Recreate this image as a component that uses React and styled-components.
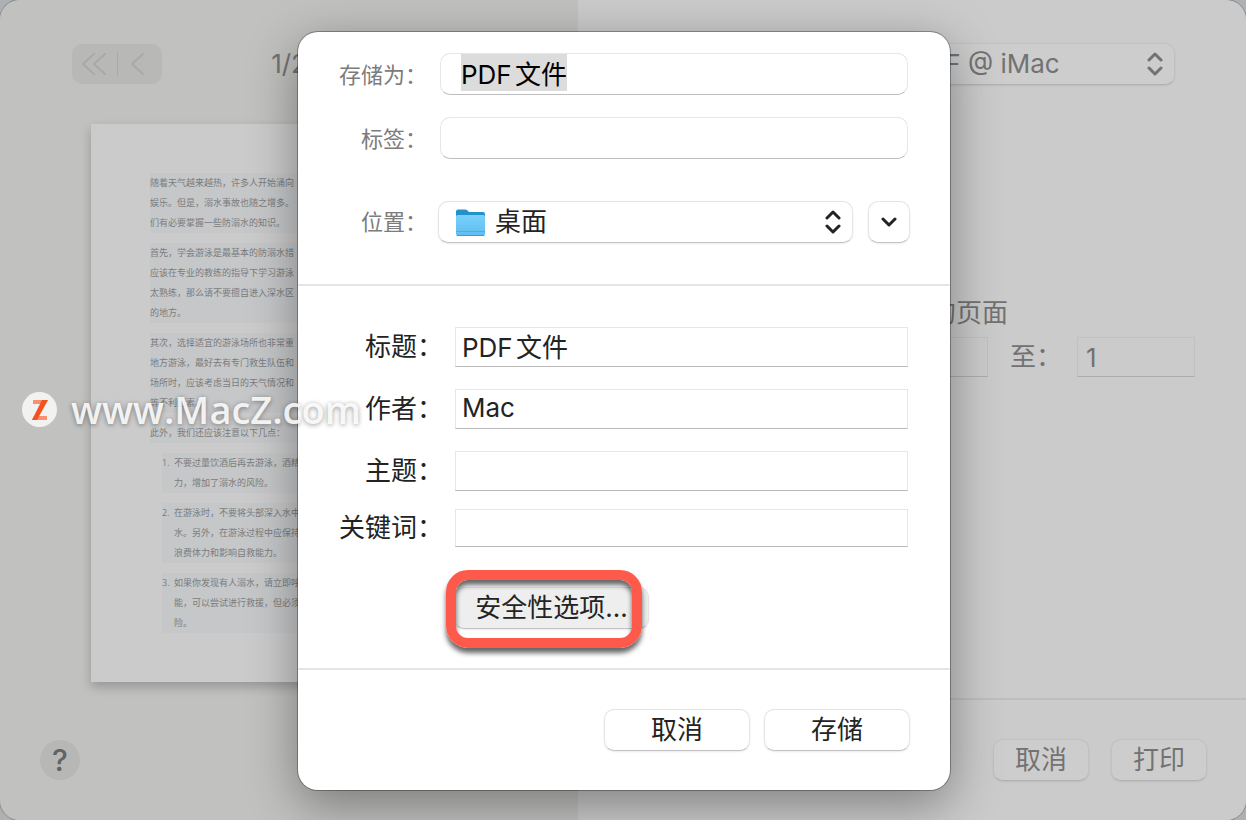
import React, { useEffect, useRef } from 'react';
import styled, { createGlobalStyle } from 'styled-components';

const GlobalStyle = createGlobalStyle`
  *, *::before, *::after {
    box-sizing: border-box;
  }

  body {
    margin: 0;
    background: #aeb1b3;
    font-family: Inter, "Noto Sans CJK SC", sans-serif;
    font-size: 26px;
  }

  button, input, select {
    font: inherit;
    color: inherit;
    margin: 0;
  }
`;

const Desktop = styled.div`
  position: relative;
  min-height: 100vh;
  overflow: hidden;
`;

const PrintWindow = styled.div`
  display: grid;
  grid-template-columns: 46.4% 1fr;
  min-height: 100vh;
  border-radius: 20px;
  overflow: hidden;
  color: #727272;
  box-shadow: 0 0 0 1px #8c8c8c;
`;

const PreviewPane = styled.section`
  display: flex;
  flex-direction: column;
  gap: 40px;
  padding: 44px 40px 40px;
  background: #c1c1bf;
`;

const PreviewHeader = styled.header`
  display: grid;
  grid-template-columns: 1fr auto 1fr;
  align-items: center;
  padding: 0 32px;
`;

const Pager = styled.div`
  display: flex;
  align-items: center;
  justify-content: center;
  width: 90px;
  height: 40px;
  border-radius: 10px;
  background: #b8b8b7;
`;

const PagerButton = styled.button`
  display: flex;
  justify-content: center;
  width: 44px;
  padding: 0;
  border: 0;
  background: none;
  color: #a9a9a8;
`;

const PagerLine = styled.span`
  width: 1px;
  height: 24px;
  background: #a8a8a7;
`;

const PageCount = styled.span`
  line-height: 40px;
`;

const Paper = styled.article`
  margin: 0 51px;
  padding: 49px 0 49px 59px;
  background: #cbcbcb;
  box-shadow: 0 5px 10px rgba(0, 0, 0, 0.22);
  color: #7b7c7d;
  font-family: "Liberation Serif", "Noto Sans CJK SC", serif;
  font-size: 9px;
  line-height: 20px;
`;

const Paragraph = styled.p`
  margin: 0 0 10px;
  background: #c5c7c9;
  white-space: pre-line;
`;

const PaperList = styled.ol`
  margin: 0;
  padding: 0 0 0 12px;
  list-style: none;
`;

const PaperItem = styled.li`
  display: flex;
  background: #c5c7c9;
  white-space: pre-line;

  & + & {
    margin-top: 10px;
  }
`;

const ItemNumber = styled.span`
  width: 12px;
  font-family: "Open Sans", sans-serif;
`;

const HelpButton = styled.button`
  width: 40px;
  height: 40px;
  margin-top: auto;
  padding: 0;
  border: 0;
  border-radius: 50%;
  background: #b7b7b6;
  color: #636363;
  font-size: 30px;
  font-weight: 500;
  line-height: 40px;
`;

const SettingsPane = styled.section`
  display: flex;
  flex-direction: column;
  background: #cbcbcb;
`;

const SettingsBody = styled.div`
  flex: 1;
  display: flex;
  flex-direction: column;
  align-items: flex-end;
  padding: 43px 51px 0 0;
`;

const PrinterRow = styled.div`
  width: 288px;
  margin: 0 20px 208px 0;
`;

const PageRange = styled.fieldset`
  width: 325px;
  margin: 0;
  padding: 0;
  border: 0;
`;

const RangeTitle = styled.legend`
  padding: 0 0 0 60px;
  line-height: 40px;
`;

const RangeRow = styled.div`
  display: flex;
  align-items: center;
  justify-content: space-between;
  margin-top: 4px;
`;

const RangeLabel = styled.label`
  line-height: 40px;
  margin-left: 7px;
`;

const RangeInput = styled.input`
  width: 118px;
  height: 40px;
  padding: 0 8px;
  border: 1px solid #c1c1c1;
  border-bottom-color: #adadad;
  background: #cbcbcb;
`;

const SettingsFooter = styled.footer`
  display: flex;
  justify-content: flex-end;
  gap: 22px;
  padding: 39px 39px 39px 0;
  border-top: 2px solid #bebebe;
`;

const Button = styled.button`
  width: ${(props) => props.$width};
  height: 42px;
  padding: 0;
  border: 1px solid ${(props) => (props.$dim ? '#c1c1c1' : '#e4e4e4')};
  border-bottom-color: ${(props) => (props.$dim ? '#b2b2b2' : '#c2c2c2')};
  border-radius: 10px;
  background: ${(props) => (props.$dim ? '#cdcdcd' : props.$pressed ? '#eeeeee' : '#ffffff')};
  box-shadow: 0 1px 2px rgba(0, 0, 0, 0.08);
  line-height: 40px;
`;

const SelectBox = styled.div`
  position: relative;
  flex: 1;
`;

const Select = styled.select`
  appearance: none;
  display: block;
  width: 100%;
  height: 42px;
  padding: 0 48px 2px ${(props) => props.$indent};
  border: 1px solid ${(props) => (props.$dim ? '#c1c1c1' : '#e4e4e4')};
  border-bottom-color: ${(props) => (props.$dim ? '#b2b2b2' : '#c2c2c2')};
  border-radius: 10px;
  background: ${(props) => (props.$dim ? '#cdcdcd' : '#ffffff')};
  box-shadow: 0 1px 2px rgba(0, 0, 0, 0.08);
`;

const SelectArrows = styled.span`
  position: absolute;
  top: 9px;
  right: 12px;
  display: flex;
  pointer-events: none;
`;

const SelectIcon = styled.span`
  position: absolute;
  top: 8px;
  left: 18px;
  display: flex;
  pointer-events: none;
`;

const Overlay = styled.div`
  position: absolute;
  inset: 0;
  display: flex;
  justify-content: center;
  align-items: flex-start;
  padding: 32px 0 30px 2px;
`;

const SaveSheet = styled.form`
  width: 100%;
  max-width: 652px;
  border-radius: 20px;
  background: #ffffff;
  color: #232323;
  box-shadow: 0 0 0 1px rgba(0, 0, 0, 0.3), 0 14px 50px rgba(0, 0, 0, 0.38);
`;

const FileSection = styled.div`
  display: flex;
  flex-direction: column;
  gap: 22px;
  padding: 21px 40px 41px 0;
  border-bottom: 2px solid #e5e5e5;
`;

const FileRow = styled.div`
  display: flex;
  align-items: center;
  gap: 11px;
  margin-top: ${(props) => (props.$spaced ? '20px' : '0')};
`;

const FileLabel = styled.label`
  width: 129px;
  padding-top: ${(props) => (props.$low ? '2px' : '0')};
  color: #7c7c7c;
  font-size: 22px;
  line-height: 40px;
  text-align: right;
`;

const FileInput = styled.input`
  flex: 1;
  min-width: 0;
  height: 42px;
  margin: 0 2px;
  padding: 0 20px 4px;
  border: 1px solid #e6e6e6;
  border-bottom-color: #bdbdbd;
  border-radius: 10px;
  background: #ffffff;
  color: #000000;
  outline: none;
  text-autospace: normal;

  &::selection {
    background: #dcdcdc;
    color: #000000;
  }
`;

const ExpandButton = styled.button`
  display: flex;
  align-items: center;
  justify-content: center;
  width: 42px;
  height: 42px;
  margin-left: 4px;
  padding: 0;
  border: 1px solid #e4e4e4;
  border-bottom-color: #c2c2c2;
  border-radius: 10px;
  background: #ffffff;
  box-shadow: 0 1px 2px rgba(0, 0, 0, 0.08);
`;

const MetaSection = styled.div`
  padding: 41px 42px 39px 0;
  border-bottom: 2px solid #e5e5e5;
`;

const MetaRow = styled.div`
  display: flex;
  align-items: center;
  gap: 12px;
  margin-bottom: ${(props) => (props.$tight ? '18px' : '22px')};
`;

const MetaLabel = styled.label`
  width: 145px;
  line-height: 38px;
  text-align: right;
`;

const MetaInput = styled.input`
  flex: 1;
  min-width: 0;
  height: ${(props) => (props.$short ? '38px' : '40px')};
  padding: 0 6px 4px;
  border: 1px solid #e6e6e6;
  border-bottom-color: #b9b9b9;
  background: #ffffff;
  outline: none;
  text-autospace: normal;
`;

const SecurityRow = styled.div`
  position: relative;
  width: 195px;
  margin: 40px 0 0 156px;
`;

const Highlight = styled.span`
  position: absolute;
  inset: -17px 7px -19px -8px;
  border: 10px solid #fd5a4c;
  border-radius: 22px;
  box-shadow: 0 5px 5px rgba(0, 0, 0, 0.6), inset 0 5px 5px rgba(0, 0, 0, 0.6);
  pointer-events: none;
`;

const SheetFooter = styled.footer`
  display: flex;
  justify-content: flex-end;
  gap: 14px;
  padding: 39px 40px 39px 0;
`;

const Watermark = styled.div`
  position: absolute;
  top: 381px;
  left: 22px;
  display: flex;
  align-items: center;
  gap: 14px;
  color: rgba(255, 255, 255, 0.88);
  font-family: "Open Sans", sans-serif;
  font-size: 38px;
  font-weight: 600;
  line-height: 56px;
  text-shadow: 0 1px 5px rgba(0, 0, 0, 0.4);
  pointer-events: none;
`;

const Chevron = ({ double }) => (
  <svg width="26" height="22" viewBox="0 0 26 22" fill="none" stroke="currentColor" strokeWidth="2" strokeLinecap="round" strokeLinejoin="round">
    {double ? (
      <>
        <path d="M12 1L1 11l11 10" />
        <path d="M23 1L12 11l11 10" />
      </>
    ) : (
      <path d="M16 1L5 11l11 10" />
    )}
  </svg>
);

const UpDown = () => (
  <svg width="16" height="24" viewBox="0 0 16 24" fill="none" stroke="currentColor" strokeWidth="3" strokeLinecap="round" strokeLinejoin="round">
    <path d="M2 8l6-6 6 6" />
    <path d="M2 16l6 6 6-6" />
  </svg>
);

const Down = () => (
  <svg width="16" height="10" viewBox="0 0 16 10" fill="none" stroke="currentColor" strokeWidth="3" strokeLinecap="round" strokeLinejoin="round">
    <path d="M2 2l6 6 6-6" />
  </svg>
);

const Folder = () => (
  <svg width="30" height="28" viewBox="0 0 30 28">
    <defs>
      <linearGradient id="folderFront" x1="0" y1="0" x2="0" y2="1">
        <stop offset="0" stopColor="#79d0fb" />
        <stop offset="1" stopColor="#5fbdf0" />
      </linearGradient>
    </defs>
    <path d="M0 2.500Q0 .5 2 .5H9Q10.500 .5 11.500 1.500L13 3H27Q29 3 29 5V12H0Z" fill="#2492ca" />
    <path d="M0 7.500Q0 6 1.500 6H27.500Q29 6 29 7.500V25Q29 27 27 27H2Q0 27 0 25Z" fill="url(#folderFront)" />
    <path d="M0 22.500H29" stroke="#4faee0" strokeWidth="1" />
    <path d="M1 26.500H28" stroke="#3b9bd0" strokeWidth="1" />
  </svg>
);

const Logo = () => (
  <svg width="35" height="35" viewBox="0 0 35 35">
    <circle cx="17.500" cy="17.500" r="17.500" fill="#f2f2f2" />
    <path d="M11 8H26L23 12H11Z" fill="#fa8f72" />
    <path d="M12 24H25V28H10Z" fill="#fa8f72" />
    <path d="M20 8H26L15 28H10Z" fill="#f4511e" />
  </svg>
);

const paragraphs = [
  '随着天气越来越热，许多人开始涌向\n娱乐。但是，溺水事故也随之增多。\n们有必要掌握一些防溺水的知识。',
  '首先，学会游泳是最基本的防溺水措\n应该在专业的教练的指导下学习游泳\n太熟练，那么请不要擅自进入深水区\n的地方。',
  '其次，选择适宜的游泳场所也非常重\n地方游泳，最好去有专门救生队伍和\n场所时，应该考虑当日的天气情况和\n等不利因素。',
  '此外，我们还应该注意以下几点：',
];

const items = [
  '不要过量饮酒后再去游泳，酒精\n力，增加了溺水的风险。',
  '在游泳时，不要将头部深入水中\n水。另外，在游泳过程中应保持\n浪费体力和影响自救能力。',
  '如果你发现有人溺水，请立即呼\n能，可以尝试进行救援，但必须\n险。',
];

const metaFields = [
  { id: 'title', label: '标题：', value: 'PDF文件' },
  { id: 'author', label: '作者：', value: 'Mac' },
  { id: 'subject', label: '主题：', value: '', tight: true },
  { id: 'keywords', label: '关键词：', value: '', short: true },
];

const PrintDialog = () => (
  <PrintWindow>
    <PreviewPane>
      <PreviewHeader>
        <Pager>
          <PagerButton aria-label="第一页">
            <Chevron double />
          </PagerButton>
          <PagerLine />
          <PagerButton aria-label="上一页">
            <Chevron />
          </PagerButton>
        </Pager>
        <PageCount>1/2</PageCount>
      </PreviewHeader>
      <Paper>
        {paragraphs.map((text) => (
          <Paragraph key={text}>{text}</Paragraph>
        ))}
        <PaperList>
          {items.map((text, index) => (
            <PaperItem key={text}>
              <ItemNumber>{index + 1}.</ItemNumber>
              <span>{text}</span>
            </PaperItem>
          ))}
        </PaperList>
      </Paper>
      <HelpButton aria-label="帮助">?</HelpButton>
    </PreviewPane>
    <SettingsPane>
      <SettingsBody>
        <PrinterRow>
          <SelectBox>
            <Select $dim $indent="22px" aria-label="打印机">
              <option>PDF @ iMac</option>
            </Select>
            <SelectArrows>
              <UpDown />
            </SelectArrows>
          </SelectBox>
        </PrinterRow>
        <PageRange>
          <RangeTitle>的页面</RangeTitle>
          <RangeRow>
            <RangeInput aria-label="从" />
            <RangeLabel htmlFor="page-to">至：</RangeLabel>
            <RangeInput id="page-to" defaultValue="1" />
          </RangeRow>
        </PageRange>
      </SettingsBody>
      <SettingsFooter>
        <Button $dim $width="96px">取消</Button>
        <Button $dim $width="96px">打印</Button>
      </SettingsFooter>
    </SettingsPane>
  </PrintWindow>
);

const SaveDialog = () => {
  const nameInput = useRef(null);

  useEffect(() => {
    nameInput.current.focus({ preventScroll: true });
    nameInput.current.select();
  }, []);

  return (
    <SaveSheet onSubmit={(e) => e.preventDefault()}>
      <FileSection>
        <FileRow>
          <FileLabel $low htmlFor="file-name">存储为：</FileLabel>
          <FileInput id="file-name" ref={nameInput} defaultValue="PDF文件" />
        </FileRow>
        <FileRow>
          <FileLabel $low htmlFor="tags">标签：</FileLabel>
          <FileInput id="tags" />
        </FileRow>
        <FileRow $spaced>
          <FileLabel htmlFor="location">位置：</FileLabel>
          <SelectBox>
            <Select id="location" $indent="56px">
              <option>桌面</option>
            </Select>
            <SelectIcon>
              <Folder />
            </SelectIcon>
            <SelectArrows>
              <UpDown />
            </SelectArrows>
          </SelectBox>
          <ExpandButton type="button" aria-label="展开">
            <Down />
          </ExpandButton>
        </FileRow>
      </FileSection>
      <MetaSection>
        {metaFields.map((field) => (
          <MetaRow key={field.id} $tight={field.tight}>
            <MetaLabel htmlFor={field.id}>{field.label}</MetaLabel>
            <MetaInput id={field.id} defaultValue={field.value} $short={field.short} />
          </MetaRow>
        ))}
        <SecurityRow>
          <Button type="button" $pressed $width="100%">安全性选项...</Button>
          <Highlight />
        </SecurityRow>
      </MetaSection>
      <SheetFooter>
        <Button type="button" $width="146px">取消</Button>
        <Button type="submit" $width="146px">存储</Button>
      </SheetFooter>
    </SaveSheet>
  );
};

const App = () => (
  <Desktop>
    <GlobalStyle />
    <PrintDialog />
    <Overlay>
      <SaveDialog />
    </Overlay>
    <Watermark>
      <Logo />
      <span>www.MacZ.com</span>
    </Watermark>
  </Desktop>
);

export default App;
